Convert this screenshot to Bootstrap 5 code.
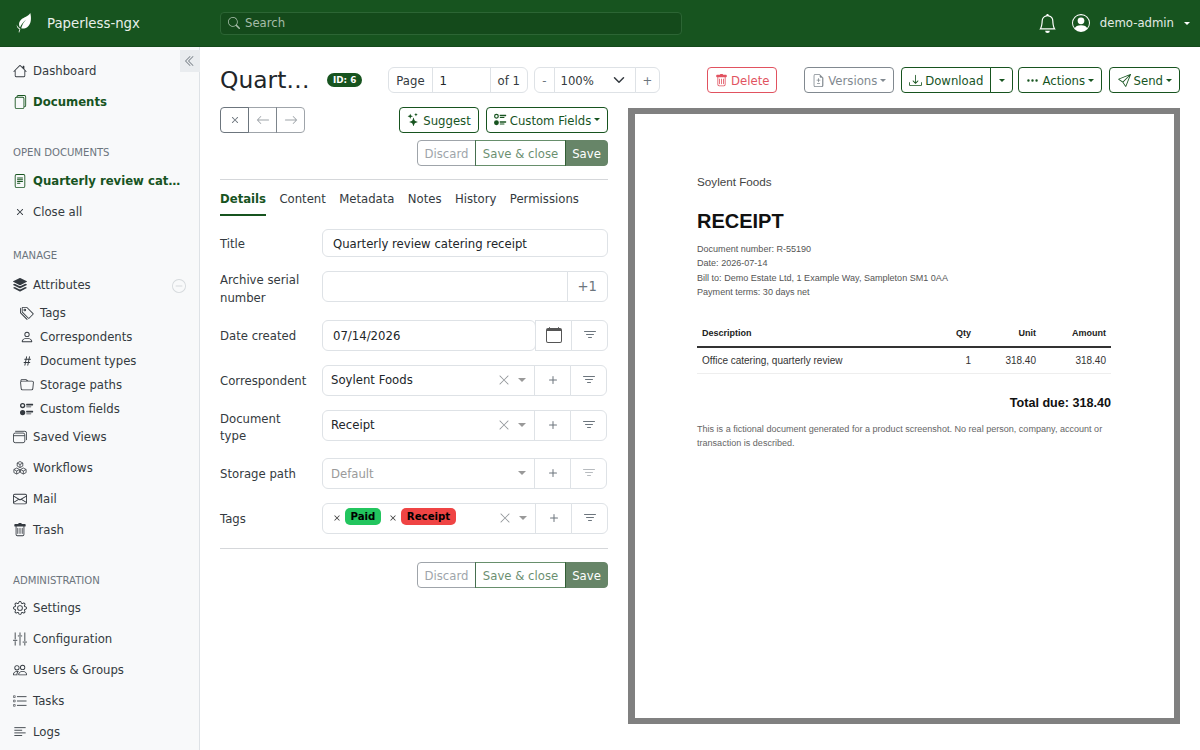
<!DOCTYPE html>
<html lang="en">
<head>
<meta charset="utf-8">
<title>Paperless-ngx</title>
<link href="https://cdn.jsdelivr.net/npm/bootstrap@5.3.0/dist/css/bootstrap.min.css" rel="stylesheet">
<style>
html,body{height:750px;overflow:hidden}
body{font-family:"DejaVu Sans",sans-serif;font-size:11.7px;color:#212529;background:#fff;line-height:1.5}
svg{fill:currentColor;flex:none;display:block}
.topbar{height:46.5px;background:#17541f;padding:1px 0 0;flex-wrap:nowrap;border-bottom:1px solid #14491b}
.brand-box{width:220px;padding-left:16px;gap:15px;color:#fff;font-size:13.3px}
.brand-box .brand-name{color:#e8efe9;padding-top:1px}
.search-box{width:462px;height:23px;background:#144a1b;border:1px solid #2c6534;border-radius:4px;color:#a5bca8;gap:5px;padding:0 7px}
.search-box span{padding-top:2px}
.user-area{color:#fff;margin-left:auto;padding-right:10px;gap:15px}
.user-cluster{gap:10px}
.user-area .user-name{color:#e3ebe4;font-size:11.7px;padding-top:2px}
.caret-mini{width:0;height:0;border-left:4px solid transparent;border-right:4px solid transparent;border-top:4px solid currentColor;display:inline-block;flex:none}
.user-caret{border-left-width:3px;border-right-width:3px;border-top-width:3px}
.page-wrap{height:703.5px}
.side-panel{width:200px;flex:none;background:#f8f9fa;border-right:1px solid #dee2e6;position:relative;padding-top:9px;color:#343a40}
.collapse-tab{position:absolute;right:-1px;top:3px;width:20px;height:22px;background:#e9ecef;color:#6c757d;display:flex;align-items:center;justify-content:center}
.side-link{display:flex;align-items:center;gap:6px;padding:7px 13px 5px;height:31px;color:#343a40;text-decoration:none;white-space:nowrap;position:relative}
.side-link svg{width:14px;height:14px;margin-bottom:2px}
.side-link.is-active{color:#17541f;font-weight:700}
.side-sub{height:24px;padding:3px 13px 1px 20px}
.side-gap{margin-top:1px}
.side-head{font-size:10.1px;color:#6c757d;padding:0 13px;height:16px;line-height:18px;text-transform:uppercase}
.head-open{margin-top:26px;margin-bottom:6px}
.head-manage{margin-top:19px;margin-bottom:7px}
.head-admin{margin-top:26px;margin-bottom:5px}
.fold-btn{position:absolute;right:13px;top:9px;color:#d5d9dc}
.main-pane{flex:1;padding:20px 20px 0 20px;min-width:0}
.head-row{height:27px;margin-bottom:13px}
.doc-title{font-size:23.4px;width:88px;flex:none;margin:0;font-weight:400;line-height:27px;white-space:nowrap;font-family:"DejaVu Sans",sans-serif}
.id-pill{background:#17541f;color:#fff;font-size:8.8px;font-weight:700;border-radius:7px;padding:0 6px;height:14px;line-height:14px;margin-left:19px;margin-right:26px;flex:none;white-space:nowrap}
.tool-group{height:26px;flex:none}
.tool-group .input-group-text,.tool-group .form-control,.tool-group .form-select,.tool-group .btn{font-size:11.7px;padding-top:3px;padding-bottom:1px;height:26px;line-height:20px;border-color:#dee2e6}
.tool-group .input-group-text{background:#fff;color:#343a40;padding-left:7px;padding-right:7px}
.page-num{width:59px!important;flex:none!important;padding-left:7px;padding-right:4px}
.zoom-sel{width:82px!important;flex:none!important;padding-left:6px;background-position:right 8px center;color:#343a40}
.tool-btn{color:#6c757d;background:#fff;padding-left:7px;padding-right:7px}
.act{--bs-btn-font-size:11.7px;--bs-btn-padding-x:6.5px;--bs-btn-border-radius:4px;padding-top:4px;padding-bottom:.5px;height:26px;line-height:19.5px;display:inline-flex;align-items:center;justify-content:center;gap:3px;white-space:nowrap;flex:none;--bs-btn-color:#17541f;--bs-btn-border-color:#17541f;--bs-btn-hover-color:#fff;--bs-btn-hover-bg:#17541f;--bs-btn-hover-border-color:#17541f;--bs-btn-disabled-color:#17541f;--bs-btn-disabled-border-color:#17541f}
.act svg{width:13px;height:13px;margin-bottom:3px}
.act.dropdown-toggle::after{margin-left:0;margin-bottom:3px}
.act-del{--bs-btn-color:#dc3545;--bs-btn-border-color:#dc3545;--bs-btn-disabled-color:#dc3545;--bs-btn-disabled-border-color:#dc3545;margin-left:49px;margin-right:27px;width:70px}
.act-del:disabled,.act-grey:disabled{opacity:.85}
.act-grey{--bs-btn-color:#6c757d;--bs-btn-border-color:#6c757d;--bs-btn-disabled-color:#6c757d;--bs-btn-disabled-border-color:#6c757d;margin-right:7px;width:90px}
.w-download{width:90px}
.w-split{width:23px}
.w-actions{width:84px;margin-left:5px;margin-right:7px}
.w-send{width:71px}
.w-suggest{width:80px}
.w-fields{width:122px}
.w-discard{width:59px}
.w-saveclose{width:91px}
.w-save{width:43px}
.act-solid{--bs-btn-disabled-bg:#164419;--bs-btn-disabled-color:#fff;--bs-btn-disabled-border-color:#164419}
.act-dis{--bs-btn-disabled-color:#6c757d;--bs-btn-disabled-border-color:#6c757d}
.left-col{width:388px;flex:none}
.right-col{flex:1;min-width:0;margin-left:20px;margin-top:1px}
.nav-grp{width:85px}
.nav-grp .btn{--bs-btn-color:#6c757d;--bs-btn-border-color:#6c757d;--bs-btn-disabled-color:#6c757d;--bs-btn-disabled-border-color:#6c757d;padding:0;justify-content:center;flex:1}
.nav-grp svg{width:14px;height:14px;margin-bottom:0}
.sep{border:0;border-top:1px solid #d5d7da;opacity:1;margin:0}
.tab-line{gap:13.3px;margin-top:8px;height:28px;margin-bottom:13.3px}
.tab-item{color:#343a40;text-decoration:none;height:28px;line-height:23px;display:block}
.tab-item.is-active{color:#17541f;font-weight:700;border-bottom:2px solid #17541f}
.form-line{display:flex;align-items:flex-start;margin-bottom:14px}
.form-tag{width:102px;flex:none;line-height:17.2px;padding-top:8px;color:#343a40}
.form-tag.two-line{padding-top:1px;height:34.3px}
.field-h{height:31px;flex-wrap:nowrap}
.field-h .form-control{height:31px;font-size:11.7px;padding:5px 10px 3px;border-color:#dee2e6;color:#212529}
.field-title{height:28.5px;font-size:11.7px;padding:5px 10px 3px;border-color:#dee2e6;color:#212529}
.line-title .form-tag{padding-top:7px}
.side-btn{width:37px;padding:0;display:flex;align-items:center;justify-content:center;border:1px solid #dee2e6;background:#fff;color:#6c757d;height:31px;margin-left:-1px;flex:none}
.side-btn svg{width:16px;height:16px}
.side-btn:last-child{border-radius:0 6px 6px 0}
.side-btn.is-faded{color:#b7bbbf}
.cal-btn{color:#555}
.plus-one{font-size:13.2px;color:#6c757d;border-color:#dee2e6;padding:0 10px;background:#fff}
.pick-box{flex:1;min-width:0;border:1px solid #dee2e6;border-radius:6px 0 0 6px;height:31px;display:flex;align-items:center;padding-left:8px;color:#212529;background:#fff}
.pick-fill{flex:1;min-width:0;white-space:nowrap;padding-top:2px}
.pick-muted{color:#9a9a9a}
.pick-x{color:#909498;margin-right:4px}
.pick-caret{color:#999;margin:0 8px 0 4px}
.tag-x{color:#333;margin:0 1.5px 0 0;display:flex}
.tag-chip{font-size:10.2px;font-weight:700;color:#000;border-radius:5px;height:17px;line-height:17px;padding:0 6px;margin-right:6px;margin-top:-3px;display:inline-block}
.chip-paid{background:#22c55e}
.chip-receipt{background:#ef4444}
.narrow-line{width:387px}
.doc-frame{border:solid #808080;border-width:6px 6px 6px 7px;height:616px;background:#808080}
.doc-sheet{background:#fff;height:604px;padding:58px 63px 0 62px;font-family:"Liberation Sans",Arial,sans-serif;color:#555}
.doc-from{font-size:11.7px;line-height:20px;color:#444}
.doc-big{font-size:20px;font-weight:700;color:#111;margin:17px 0 0;line-height:24px;font-family:"Liberation Sans",Arial,sans-serif}
.doc-meta{font-size:9.05px;line-height:14.5px;margin-top:9px;color:#555}
.doc-table{width:100%;font-size:9px;margin-top:21px;color:#333;border-collapse:collapse;table-layout:fixed}
.doc-table th{font-weight:700;height:26px;border-bottom:2px solid #333;padding:2px 5px 0;color:#222}
.doc-table td{height:27px;border-bottom:1px solid #eee;padding:1px 5px 0;font-size:10px}
.doc-total{font-size:12.6px;font-weight:700;color:#111;text-align:right;margin-top:20px;line-height:19px}
.doc-note{font-size:9.05px;line-height:14px;margin-top:9px;color:#666;width:410px}
</style>
</head>
<body>
<nav class="navbar topbar d-flex align-items-center">
  <div class="d-flex align-items-center brand-box">
    <svg width="16" height="20" viewBox="0 0 16 20" style="fill:#fff"><path d="M14.3 0C15.6 5.500 15.200 11 11.500 14 9.500 15.500 7 16 5.200 15.300 6 12 7.800 9 10.200 6.500 7.500 8.500 5.300 11.500 4 14.500 2.500 12 2.700 8.500 5.500 6.200 8 4.200 12 3.500 14.300 0Z"/><path d="M.8 11.500C1.300 13.500 2.500 15 4.300 15.800L4.300 16.300C3.800 17.500 3.500 18.500 3.300 19.500L2.600 19.300C2.800 18 3.200 17 3.600 16.300 1.700 15.600.5 13.500.8 11.500Z"/></svg>
    <span class="brand-name">Paperless-ngx</span>
  </div>
  <div class="search-box d-flex align-items-center">
    <svg width="12" height="12" viewBox="0 0 16 16"><path d="M11.742 10.344a6.5 6.5 0 1 0-1.397 1.398h-.001c.03.04.062.078.098.115l3.85 3.85a1 1 0 0 0 1.415-1.414l-3.85-3.85a1.007 1.007 0 0 0-.115-.1zM12 6.5a5.5 5.5 0 1 1-11 0 5.5 5.5 0 0 1 11 0z"/></svg>
    <span>Search</span>
  </div>
  <div class="user-area d-flex align-items-center">
    <svg width="19" height="19" viewBox="0 0 16 16"><path d="M8 16a2 2 0 0 0 2-2H6a2 2 0 0 0 2 2zM8 1.918l-.797.161A4.002 4.002 0 0 0 4 6c0 .628-.134 2.197-.459 3.742-.16.767-.376 1.566-.663 2.258h10.244c-.287-.692-.502-1.49-.663-2.258C12.134 8.197 12 6.628 12 6a4.002 4.002 0 0 0-3.203-3.92L8 1.917zM14.22 12c.223.447.481.801.78 1H1c.299-.199.557-.553.78-1C2.68 10.2 3 6.88 3 6c0-2.42 1.72-4.44 4.005-4.901a1 1 0 1 1 1.99 0A5.002 5.002 0 0 1 13 6c0 .88.32 4.2 1.22 6z"/></svg>
    <div class="d-flex align-items-center user-cluster">
      <svg width="18" height="18" viewBox="0 0 16 16"><path d="M11 6a3 3 0 1 1-6 0 3 3 0 0 1 6 0z"/><path fill-rule="evenodd" d="M0 8a8 8 0 1 1 16 0A8 8 0 0 1 0 8zm8-7a7 7 0 0 0-5.468 11.37C3.242 11.226 4.805 10 8 10s4.757 1.225 5.468 2.37A7 7 0 0 0 8 1z"/></svg>
      <span class="user-name">demo-admin</span>
      <span class="caret-mini user-caret"></span>
    </div>
  </div>
</nav>

<div class="d-flex page-wrap">
  <aside class="side-panel">
    <div class="collapse-tab"><svg width="12" height="12" viewBox="0 0 16 16"><path d="M8.354 1.646a.5.5 0 0 1 0 .708L2.707 8l5.647 5.646a.5.5 0 0 1-.708.708l-6-6a.5.5 0 0 1 0-.708l6-6a.5.5 0 0 1 .708 0z"/><path d="M12.354 1.646a.5.5 0 0 1 0 .708L6.707 8l5.647 5.646a.5.5 0 0 1-.708.708l-6-6a.5.5 0 0 1 0-.708l6-6a.5.5 0 0 1 .708 0z"/></svg></div>
    <a class="side-link" href="#"><svg viewBox="0 0 16 16"><path d="M8.707 1.5a1 1 0 0 0-1.414 0L.646 8.146a.5.5 0 0 0 .708.708L2 8.207V13.5A1.5 1.5 0 0 0 3.5 15h9a1.5 1.5 0 0 0 1.5-1.5V8.207l.646.647a.5.5 0 0 0 .708-.708L13 5.793V2.5a.5.5 0 0 0-.5-.5h-1a.5.5 0 0 0-.5.5v1.293L8.707 1.5ZM13 7.207V13.5a.5.5 0 0 1-.5.5h-9a.5.5 0 0 1-.5-.5V7.207l5-5 5 5Z"/></svg>Dashboard</a>
    <a class="side-link is-active" href="#"><svg viewBox="0 0 16 16"><path d="M13 0H6a2 2 0 0 0-2 2 2 2 0 0 0-2 2v10a2 2 0 0 0 2 2h7a2 2 0 0 0 2-2 2 2 0 0 0 2-2V2a2 2 0 0 0-2-2zm0 13V4a2 2 0 0 0-2-2H5a1 1 0 0 1 1-1h7a1 1 0 0 1 1 1v10a1 1 0 0 1-1 1zM3 4a1 1 0 0 1 1-1h7a1 1 0 0 1 1 1v10a1 1 0 0 1-1 1H4a1 1 0 0 1-1-1V4z"/></svg>Documents</a>
    <div class="side-head head-open">Open documents</div>
    <a class="side-link is-active" href="#"><svg viewBox="0 0 16 16"><path d="M5 4a.5.5 0 0 0 0 1h6a.5.5 0 0 0 0-1H5zm-.5 2.5A.5.5 0 0 1 5 6h6a.5.5 0 0 1 0 1H5a.5.5 0 0 1-.5-.5zM5 8a.5.5 0 0 0 0 1h6a.5.5 0 0 0 0-1H5zm0 2a.5.5 0 0 0 0 1h3a.5.5 0 0 0 0-1H5z"/><path d="M2 2a2 2 0 0 1 2-2h8a2 2 0 0 1 2 2v12a2 2 0 0 1-2 2H4a2 2 0 0 1-2-2V2zm10-1H4a1 1 0 0 0-1 1v12a1 1 0 0 0 1 1h8a1 1 0 0 0 1-1V2a1 1 0 0 0-1-1z"/></svg>Quarterly review cat…</a>
    <a class="side-link" href="#"><svg viewBox="0 0 16 16"><path d="M4.646 4.646a.5.5 0 0 1 .708 0L8 7.293l2.646-2.647a.5.5 0 0 1 .708.708L8.707 8l2.647 2.646a.5.5 0 0 1-.708.708L8 8.707l-2.646 2.647a.5.5 0 0 1-.708-.708L7.293 8 4.646 5.354a.5.5 0 0 1 0-.708z"/></svg>Close all</a>
    <div class="side-head head-manage">Manage</div>
    <a class="side-link" href="#"><svg viewBox="0 0 16 16"><path d="m14.12 10.163 1.715.858c.22.11.22.424 0 .534L8.267 15.34a.598.598 0 0 1-.534 0L.165 11.555a.299.299 0 0 1 0-.534l1.716-.858 5.317 2.659c.505.252 1.1.252 1.604 0l5.317-2.66zM7.733.063a.598.598 0 0 1 .534 0l7.568 3.784a.3.3 0 0 1 0 .535L8.267 8.165a.598.598 0 0 1-.534 0L.165 4.382a.299.299 0 0 1 0-.535L7.733.063z"/><path d="m14.12 6.576 1.715.858c.22.11.22.424 0 .534l-7.568 3.784a.598.598 0 0 1-.534 0L.165 7.968a.299.299 0 0 1 0-.534l1.716-.858 5.317 2.659c.505.252 1.1.252 1.604 0l5.317-2.659z"/></svg>Attributes<span class="fold-btn"><svg viewBox="0 0 16 16"><path d="M8 15A7 7 0 1 1 8 1a7 7 0 0 1 0 14zm0 1A8 8 0 1 0 8 0a8 8 0 0 0 0 16z"/><path d="M4 8a.5.5 0 0 1 .5-.5h7a.5.5 0 0 1 0 1h-7A.5.5 0 0 1 4 8z"/></svg></span></a>
    <a class="side-link side-sub" href="#"><svg viewBox="0 0 16 16"><path d="M3 2v4.586l7 7L14.586 9l-7-7H3zM2 2a1 1 0 0 1 1-1h4.586a1 1 0 0 1 .707.293l7 7a1 1 0 0 1 0 1.414l-4.586 4.586a1 1 0 0 1-1.414 0l-7-7A1 1 0 0 1 2 6.586V2z"/><path d="M5.5 5a.5.5 0 1 1 0-1 .5.5 0 0 1 0 1zm0 1a1.5 1.5 0 1 0 0-3 1.5 1.5 0 0 0 0 3zM1 7.086a1 1 0 0 0 .293.707L8.75 15.25l-.043.043a1 1 0 0 1-1.414 0l-7-7A1 1 0 0 1 0 7.586V3a1 1 0 0 1 1-1v5.086z"/></svg>Tags</a>
    <a class="side-link side-sub" href="#"><svg viewBox="0 0 16 16"><path d="M8 8a3 3 0 1 0 0-6 3 3 0 0 0 0 6Zm2-3a2 2 0 1 1-4 0 2 2 0 0 1 4 0Zm4 8c0 1-1 1-1 1H3s-1 0-1-1 1-4 6-4 6 3 6 4Zm-1-.004c-.001-.246-.154-.986-.832-1.664C11.516 10.68 10.289 10 8 10c-2.29 0-3.516.68-4.168 1.332-.678.678-.83 1.418-.832 1.664h10Z"/></svg>Correspondents</a>
    <a class="side-link side-sub" href="#"><svg viewBox="0 0 16 16"><path d="M8.39 12.648a1.32 1.32 0 0 0-.015.18c0 .305.21.508.5.508.266 0 .492-.172.555-.477l.554-2.703h1.204c.421 0 .617-.234.617-.547 0-.312-.188-.53-.617-.53h-.985l.516-2.524h1.265c.43 0 .618-.227.618-.547 0-.313-.188-.524-.618-.524h-1.046l.476-2.304a1.06 1.06 0 0 0 .016-.164.51.51 0 0 0-.516-.516.54.54 0 0 0-.539.43l-.523 2.554H7.617l.477-2.304c.008-.04.015-.118.015-.164a.512.512 0 0 0-.523-.516.539.539 0 0 0-.531.43L6.53 5.484H5.414c-.43 0-.617.22-.617.532 0 .312.187.539.617.539h.906l-.515 2.523H4.609c-.421 0-.609.219-.609.531 0 .313.188.547.61.547h.976l-.516 2.492c-.008.04-.015.125-.015.18 0 .305.21.508.5.508.265 0 .492-.172.554-.477l.555-2.703h2.242l-.515 2.492zm-1-6.109h2.266l-.515 2.563H6.859l.532-2.563z"/></svg>Document types</a>
    <a class="side-link side-sub" href="#"><svg viewBox="0 0 16 16"><path d="M.54 3.87.5 3a2 2 0 0 1 2-2h3.672a2 2 0 0 1 1.414.586l.828.828A2 2 0 0 0 9.828 3h3.982a2 2 0 0 1 1.992 2.181l-.637 7A2 2 0 0 1 13.174 14H2.826a2 2 0 0 1-1.991-1.819l-.637-7a1.99 1.99 0 0 1 .342-1.31zM2.19 4a1 1 0 0 0-.996 1.09l.637 7a1 1 0 0 0 .995.91h10.348a1 1 0 0 0 .995-.91l.637-7A1 1 0 0 0 13.81 4H2.19zm4.69-1.707A1 1 0 0 0 6.172 2H2.5a1 1 0 0 0-1 .981l.006.139C1.72 3.042 1.95 3 2.19 3h5.396l-.707-.707z"/></svg>Storage paths</a>
    <a class="side-link side-sub" href="#"><svg viewBox="0 0 16 16"><path d="M7 2.5a.5.5 0 0 1 .5-.5h7a.5.5 0 0 1 .5.5v1a.5.5 0 0 1-.5.5h-7a.5.5 0 0 1-.5-.5v-1zM0 12a3 3 0 1 1 6 0 3 3 0 0 1-6 0zm7-1.5a.5.5 0 0 1 .5-.5h7a.5.5 0 0 1 .5.5v1a.5.5 0 0 1-.5.5h-7a.5.5 0 0 1-.5-.5v-1zm0-5a.5.5 0 0 1 .5-.5h5a.5.5 0 0 1 0 1h-5a.5.5 0 0 1-.5-.5zm0 8a.5.5 0 0 1 .5-.5h5a.5.5 0 0 1 0 1h-5a.5.5 0 0 1-.5-.5zM3 1a3 3 0 1 0 0 6 3 3 0 0 0 0-6zm0 4.5a1.5 1.5 0 1 1 0-3 1.5 1.5 0 0 1 0 3z"/></svg>Custom fields</a>
    <a class="side-link side-gap" href="#"><svg viewBox="0 0 16 16" style="fill:none;stroke:currentColor"><rect x=".5" y="3.500" width="13" height="11" rx="2"/><path d="M.5 6.500h13M2.500 1.500h11a2 2 0 0 1 2 2v8"/></svg>Saved Views</a>
    <a class="side-link" href="#"><svg viewBox="0 0 16 16" style="fill:none;stroke:currentColor" stroke-width=".9" stroke-linejoin="round"><path d="M8 .6 11.2 2.300V5.800L8 7.500 4.800 5.800V2.300ZM4.800 2.300 8 4 11.200 2.300M8 4V7.500"/><path d="M4.200 8 7.400 9.700V13.200L4.200 14.900 1 13.200V9.700ZM1 9.700 4.200 11.400 7.400 9.700M4.200 11.400V14.900"/><path d="M11.800 8 15 9.700V13.200L11.800 14.900 8.600 13.200V9.700ZM8.600 9.700 11.800 11.400 15 9.700M11.800 11.400V14.900"/></svg>Workflows</a>
    <a class="side-link" href="#"><svg viewBox="0 0 16 16"><path d="M0 4a2 2 0 0 1 2-2h12a2 2 0 0 1 2 2v8a2 2 0 0 1-2 2H2a2 2 0 0 1-2-2V4Zm2-1a1 1 0 0 0-1 1v.217l7 4.2 7-4.2V4a1 1 0 0 0-1-1H2Zm13 2.383-4.708 2.825L15 11.105V5.383Zm-.034 6.876-5.64-3.471L8 9.583l-1.326-.795-5.64 3.47A1 1 0 0 0 2 13h12a1 1 0 0 0 .966-.741ZM1 11.105l4.708-2.897L1 5.383v5.722Z"/></svg>Mail</a>
    <a class="side-link" href="#"><svg viewBox="0 0 16 16"><path d="M5.5 5.5A.5.5 0 0 1 6 6v6a.5.5 0 0 1-1 0V6a.5.5 0 0 1 .5-.5zm2.5 0a.5.5 0 0 1 .5.5v6a.5.5 0 0 1-1 0V6a.5.5 0 0 1 .5-.5zm3 .5a.5.5 0 0 0-1 0v6a.5.5 0 0 0 1 0V6z"/><path d="M14.5 3a1 1 0 0 1-1 1H13v9a2 2 0 0 1-2 2H5a2 2 0 0 1-2-2V4h-.5a1 1 0 0 1-1-1V2a1 1 0 0 1 1-1H6a1 1 0 0 1 1-1h2a1 1 0 0 1 1 1h3.5a1 1 0 0 1 1 1v1zM4.118 4 4 4.059V13a1 1 0 0 0 1 1h6a1 1 0 0 0 1-1V4.059L11.882 4H4.118zM2.5 3V2h11v1h-11z"/></svg>Trash</a>
    <div class="side-head head-admin">Administration</div>
    <a class="side-link" href="#"><svg viewBox="0 0 16 16"><path d="M8 4.754a3.246 3.246 0 1 0 0 6.492 3.246 3.246 0 0 0 0-6.492zM5.754 8a2.246 2.246 0 1 1 4.492 0 2.246 2.246 0 0 1-4.492 0z"/><path d="M9.796 1.343c-.527-1.79-3.065-1.79-3.592 0l-.094.319a.873.873 0 0 1-1.255.52l-.292-.16c-1.64-.892-3.433.902-2.54 2.541l.159.292a.873.873 0 0 1-.52 1.255l-.319.094c-1.79.527-1.79 3.065 0 3.592l.319.094a.873.873 0 0 1 .52 1.255l-.16.292c-.892 1.64.901 3.434 2.541 2.54l.292-.159a.873.873 0 0 1 1.255.52l.094.319c.527 1.79 3.065 1.79 3.592 0l.094-.319a.873.873 0 0 1 1.255-.52l.292.16c1.64.893 3.434-.902 2.54-2.541l-.159-.292a.873.873 0 0 1 .52-1.255l.319-.094c1.79-.527 1.79-3.065 0-3.592l-.319-.094a.873.873 0 0 1-.52-1.255l.16-.292c.893-1.64-.902-3.433-2.541-2.54l-.292.159a.873.873 0 0 1-1.255-.52l-.094-.319zm-2.633.283c.246-.835 1.428-.835 1.674 0l.094.319a1.873 1.873 0 0 0 2.693 1.115l.291-.16c.764-.415 1.6.42 1.184 1.185l-.159.292a1.873 1.873 0 0 0 1.116 2.692l.318.094c.835.246.835 1.428 0 1.674l-.319.094a1.873 1.873 0 0 0-1.115 2.693l.16.291c.415.764-.42 1.6-1.185 1.184l-.291-.159a1.873 1.873 0 0 0-2.693 1.116l-.094.318c-.246.835-1.428.835-1.674 0l-.094-.319a1.873 1.873 0 0 0-2.692-1.115l-.292.16c-.764.415-1.6-.42-1.184-1.185l.159-.291A1.873 1.873 0 0 0 1.945 8.93l-.319-.094c-.835-.246-.835-1.428 0-1.674l.319-.094A1.873 1.873 0 0 0 3.06 4.377l-.16-.292c-.415-.764.42-1.6 1.185-1.184l.292.159a1.873 1.873 0 0 0 2.692-1.115l.094-.319z"/></svg>Settings</a>
    <a class="side-link" href="#"><svg viewBox="0 0 16 16" style="fill:none;stroke:currentColor" stroke-linecap="round"><path d="M2.500 1v7M2.500 11v4M8 1v2M8 6v9M13.500 1v9M13.500 13v2M.5 9.500h4M6 4.500h4M11.500 11.500h4"/></svg>Configuration</a>
    <a class="side-link" href="#"><svg viewBox="0 0 16 16"><path d="M15 14s1 0 1-1-1-4-5-4-5 3-5 4 1 1 1 1h8Zm-7.978-1A.261.261 0 0 1 7 12.996c.001-.264.167-1.03.76-1.72C8.312 10.629 9.282 10 11 10c1.717 0 2.687.63 3.24 1.276.593.69.758 1.457.76 1.72l-.008.002a.274.274 0 0 1-.014.002H7.022ZM11 7a2 2 0 1 0 0-4 2 2 0 0 0 0 4Zm3-2a3 3 0 1 1-6 0 3 3 0 0 1 6 0ZM6.936 9.28a5.88 5.88 0 0 0-1.23-.247A7.35 7.35 0 0 0 5 9c-4 0-5 3-5 4 0 .667.333 1 1 1h4.216A2.238 2.238 0 0 1 5 13c0-1.01.377-2.042 1.09-2.904.243-.294.526-.569.846-.816ZM4.92 10A5.493 5.493 0 0 0 4 13H1c0-.26.164-1.03.76-1.724.545-.636 1.492-1.256 3.16-1.275ZM1.5 5.5a3 3 0 1 1 6 0 3 3 0 0 1-6 0Zm3-2a2 2 0 1 0 0 4 2 2 0 0 0 0-4Z"/></svg>Users &amp; Groups</a>
    <a class="side-link" href="#"><svg viewBox="0 0 16 16" style="fill:none;stroke:currentColor" stroke-linecap="round"><path d="M5 3h10M5 8h10M5 13h10"/><path d="M1 2h1.500v2H1zM1 7h1.500v2H1zM1 12h1.500v2H1z" stroke-width=".7"/></svg>Tasks</a>
    <a class="side-link" href="#"><svg viewBox="0 0 16 16" style="fill:none;stroke:currentColor" stroke-linecap="round"><path d="M2 3h12M2 6h8M2 9h12M2 12h8"/></svg>Logs</a>
  </aside>

  <main class="main-pane">
    <div class="d-flex align-items-center head-row">
      <h1 class="doc-title">Quart…</h1>
      <span class="id-pill">ID: 6</span>
      <div class="input-group tool-group flex-nowrap" style="width:135px">
        <span class="input-group-text">Page</span>
        <input class="form-control page-num" type="text" value="1" aria-label="Page">
        <span class="input-group-text">of 1</span>
      </div>
      <div class="input-group tool-group flex-nowrap" style="width:124px;margin-left:11px">
        <button class="btn tool-btn" type="button">-</button>
        <select class="form-select zoom-sel" aria-label="Zoom"><option>100%</option></select>
        <button class="btn tool-btn" type="button">+</button>
      </div>
      <button class="btn act act-del" type="button" disabled><svg viewBox="0 0 16 16"><path d="M5.5 5.5A.5.5 0 0 1 6 6v6a.5.5 0 0 1-1 0V6a.5.5 0 0 1 .5-.5zm2.5 0a.5.5 0 0 1 .5.5v6a.5.5 0 0 1-1 0V6a.5.5 0 0 1 .5-.5zm3 .5a.5.5 0 0 0-1 0v6a.5.5 0 0 0 1 0V6z"/><path d="M14.5 3a1 1 0 0 1-1 1H13v9a2 2 0 0 1-2 2H5a2 2 0 0 1-2-2V4h-.5a1 1 0 0 1-1-1V2a1 1 0 0 1 1-1H6a1 1 0 0 1 1-1h2a1 1 0 0 1 1 1h3.5a1 1 0 0 1 1 1v1zM4.118 4 4 4.059V13a1 1 0 0 0 1 1h6a1 1 0 0 0 1-1V4.059L11.882 4H4.118zM2.5 3V2h11v1h-11z"/></svg>Delete</button>
      <button class="btn act act-grey dropdown-toggle" type="button" disabled><svg viewBox="0 0 16 16"><path d="M8 5a.5.5 0 0 1 .5.5V7H10a.5.5 0 0 1 0 1H8.500v1.500a.5.5 0 0 1-1 0V8H6a.5.5 0 0 1 0-1h1.500V5.500A.5.5 0 0 1 8 5zm-2 6.500a.5.5 0 0 1 .5-.5h3a.5.5 0 0 1 0 1h-3a.5.5 0 0 1-.5-.5z"/><path d="M9.293 0H4a2 2 0 0 0-2 2v12a2 2 0 0 0 2 2h8a2 2 0 0 0 2-2V4.707L9.293 0zM9.500 1.500v2a1 1 0 0 0 1 1h2V14a1 1 0 0 1-1 1H4a1 1 0 0 1-1-1V2a1 1 0 0 1 1-1h5.500v.5z"/></svg>Versions</button>
      <div class="btn-group">
        <button class="btn act w-download" type="button"><svg viewBox="0 0 16 16"><path d="M.5 9.900a.5.5 0 0 1 .5.5v2.500a1 1 0 0 0 1 1h12a1 1 0 0 0 1-1v-2.500a.5.5 0 0 1 1 0v2.500a2 2 0 0 1-2 2H2a2 2 0 0 1-2-2v-2.500a.5.5 0 0 1 .5-.5z"/><path d="M7.646 11.854a.5.5 0 0 0 .708 0l3-3a.5.5 0 0 0-.708-.708L8.500 10.293V1.500a.5.5 0 0 0-1 0v8.793L5.354 8.146a.5.5 0 1 0-.708.708l3 3z"/></svg>Download</button>
        <button class="btn act w-split dropdown-toggle dropdown-toggle-split" type="button" aria-label="More"></button>
      </div>
      <button class="btn act w-actions dropdown-toggle" type="button"><svg viewBox="0 0 16 16"><path d="M3 9.500a1.500 1.500 0 1 1 0-3 1.500 1.500 0 0 1 0 3zm5 0a1.500 1.500 0 1 1 0-3 1.500 1.500 0 0 1 0 3zm5 0a1.500 1.500 0 1 1 0-3 1.500 1.500 0 0 1 0 3z"/></svg>Actions</button>
      <button class="btn act w-send dropdown-toggle" type="button"><svg viewBox="0 0 16 16"><path d="M15.854.146a.5.5 0 0 1 .11.54l-5.819 14.547a.75.75 0 0 1-1.329.124l-3.178-4.995L.643 7.184a.75.75 0 0 1 .124-1.33L15.314.037a.5.5 0 0 1 .54.11ZM6.636 10.070l2.761 4.338L14.130 2.576 6.636 10.070Zm6.787-8.201L1.591 6.602l4.339 2.760 7.494-7.493Z"/></svg>Send</button>
    </div>

    <div class="d-flex">
      <section class="left-col">
        <div class="d-flex justify-content-between">
          <div class="btn-group nav-grp">
            <button class="btn act" type="button"><svg viewBox="0 0 16 16"><path d="M4.646 4.646a.5.5 0 0 1 .708 0L8 7.293l2.646-2.647a.5.5 0 0 1 .708.708L8.707 8l2.647 2.646a.5.5 0 0 1-.708.708L8 8.707l-2.646 2.647a.5.5 0 0 1-.708-.708L7.293 8 4.646 5.354a.5.5 0 0 1 0-.708z"/></svg></button>
            <button class="btn act" type="button" disabled><svg viewBox="0 0 16 16"><path d="M15 8a.5.5 0 0 0-.5-.5H2.707l3.147-3.146a.5.5 0 1 0-.708-.708l-4 4a.5.5 0 0 0 0 .708l4 4a.5.5 0 0 0 .708-.708L2.707 8.500H14.500A.5.5 0 0 0 15 8z"/></svg></button>
            <button class="btn act" type="button" disabled><svg viewBox="0 0 16 16"><path d="M1 8a.5.5 0 0 1 .5-.5h11.793l-3.147-3.146a.5.5 0 0 1 .708-.708l4 4a.5.5 0 0 1 0 .708l-4 4a.5.5 0 0 1-.708-.708L13.293 8.500H1.500A.5.5 0 0 1 1 8z"/></svg></button>
          </div>
          <div class="d-flex" style="gap:7px">
            <button class="btn act w-suggest" type="button"><svg viewBox="0 0 16 16"><path d="M7.657 6.247c.11-.33.576-.33.686 0l.645 1.937a2.890 2.890 0 0 0 1.829 1.828l1.936.645c.33.11.33.576 0 .686l-1.937.645a2.890 2.890 0 0 0-1.828 1.829l-.645 1.936a.361.361 0 0 1-.686 0l-.645-1.937a2.890 2.890 0 0 0-1.828-1.828l-1.937-.645a.361.361 0 0 1 0-.686l1.937-.645a2.890 2.890 0 0 0 1.828-1.828l.645-1.937zM3.794 1.148a.217.217 0 0 1 .412 0l.387 1.162c.173.518.579.924 1.097 1.097l1.162.387a.217.217 0 0 1 0 .412l-1.162.387A1.734 1.734 0 0 0 4.593 5.690l-.387 1.162a.217.217 0 0 1-.412 0L3.407 5.690A1.734 1.734 0 0 0 2.310 4.593l-1.162-.387a.217.217 0 0 1 0-.412l1.162-.387A1.734 1.734 0 0 0 3.407 2.310l.387-1.162zM10.863.099a.145.145 0 0 1 .274 0l.258.774c.115.346.386.617.732.732l.774.258a.145.145 0 0 1 0 .274l-.774.258a1.156 1.156 0 0 0-.732.732l-.258.774a.145.145 0 0 1-.274 0l-.258-.774a1.156 1.156 0 0 0-.732-.732L9.100 2.137a.145.145 0 0 1 0-.274l.774-.258c.346-.115.617-.386.732-.732L10.863.100z"/></svg>Suggest</button>
            <button class="btn act w-fields dropdown-toggle" type="button"><svg viewBox="0 0 16 16"><path d="M7 2.500a.5.5 0 0 1 .5-.5h7a.5.5 0 0 1 .5.5v1a.5.5 0 0 1-.5.5h-7a.5.5 0 0 1-.5-.5v-1zM0 12a3 3 0 1 1 6 0 3 3 0 0 1-6 0zm7-1.500a.5.5 0 0 1 .5-.5h7a.5.5 0 0 1 .5.5v1a.5.5 0 0 1-.5.5h-7a.5.5 0 0 1-.5-.5v-1zm0-5a.5.5 0 0 1 .5-.5h5a.5.5 0 0 1 0 1h-5a.5.5 0 0 1-.5-.5zm0 8a.5.5 0 0 1 .5-.5h5a.5.5 0 0 1 0 1h-5a.5.5 0 0 1-.5-.5zM3 1a3 3 0 1 0 0 6 3 3 0 0 0 0-6zm0 4.500a1.500 1.500 0 1 1 0-3 1.500 1.500 0 0 1 0 3z"/></svg>Custom Fields</button>
          </div>
        </div>
        <div class="d-flex justify-content-end" style="margin-top:7px;margin-bottom:13px">
          <div class="btn-group">
            <button class="btn act act-dis w-discard" type="button" disabled>Discard</button>
            <button class="btn act w-saveclose" type="button" disabled>Save &amp; close</button>
            <button class="btn act act-solid w-save" type="button" disabled>Save</button>
          </div>
        </div>
        <hr class="sep">
        <div class="d-flex tab-line">
          <a class="tab-item is-active" href="#">Details</a>
          <a class="tab-item" href="#">Content</a>
          <a class="tab-item" href="#">Metadata</a>
          <a class="tab-item" href="#">Notes</a>
          <a class="tab-item" href="#">History</a>
          <a class="tab-item" href="#">Permissions</a>
        </div>

        <div class="form-line line-title"><label class="form-tag">Title</label><input class="form-control field-title" type="text" value="Quarterly review catering receipt" aria-label="Title"></div>
        <div class="form-line"><label class="form-tag two-line">Archive serial<br>number</label>
          <div class="input-group field-h flex-grow-1"><input class="form-control" type="text" aria-label="Archive serial number"><span class="input-group-text plus-one">+1</span></div>
        </div>
        <div class="form-line"><label class="form-tag">Date created</label>
          <div class="d-flex flex-grow-1 field-h">
            <div class="input-group field-h flex-grow-1"><input class="form-control" type="text" value="07/14/2026" aria-label="Date created"></div>
            <div class="side-btn cal-btn"><svg viewBox="0 0 16 16"><path d="M3.500 0a.5.5 0 0 1 .5.5V1h8V.5a.5.5 0 0 1 1 0V1h1a2 2 0 0 1 2 2v11a2 2 0 0 1-2 2H2a2 2 0 0 1-2-2V3a2 2 0 0 1 2-2h1V.5a.5.5 0 0 1 .5-.5zM1 4v10a1 1 0 0 0 1 1h12a1 1 0 0 0 1-1V4H1z"/></svg></div>
            <div class="side-btn"><svg viewBox="0 0 16 16"><path d="M6 10.500a.5.5 0 0 1 .5-.5h3a.5.5 0 0 1 0 1h-3a.5.5 0 0 1-.5-.5zm-2-3a.5.5 0 0 1 .5-.5h7a.5.5 0 0 1 0 1h-7a.5.5 0 0 1-.5-.5zm-2-3a.5.5 0 0 1 .5-.5h11a.5.5 0 0 1 0 1h-11a.5.5 0 0 1-.5-.5z"/></svg></div>
          </div>
        </div>
        <div class="form-line narrow-line"><label class="form-tag">Correspondent</label>
          <div class="d-flex flex-grow-1 field-h">
            <div class="pick-box"><span class="pick-fill">Soylent Foods</span><svg class="pick-x" width="12" height="12" viewBox="0 0 16 16"><path d="M2.146 2.854a.5.5 0 1 1 .708-.708L8 7.293l5.146-5.147a.5.5 0 0 1 .708.708L8.707 8l5.147 5.146a.5.5 0 0 1-.708.708L8 8.707l-5.146 5.147a.5.5 0 0 1-.708-.708L7.293 8 2.146 2.854Z"/></svg><span class="caret-mini pick-caret"></span></div>
            <div class="side-btn"><svg viewBox="0 0 16 16"><path d="M8 4a.5.5 0 0 1 .5.5v3h3a.5.5 0 0 1 0 1h-3v3a.5.5 0 0 1-1 0v-3h-3a.5.5 0 0 1 0-1h3v-3A.5.5 0 0 1 8 4z"/></svg></div>
            <div class="side-btn"><svg viewBox="0 0 16 16"><path d="M6 10.500a.5.5 0 0 1 .5-.5h3a.5.5 0 0 1 0 1h-3a.5.5 0 0 1-.5-.5zm-2-3a.5.5 0 0 1 .5-.5h7a.5.5 0 0 1 0 1h-7a.5.5 0 0 1-.5-.5zm-2-3a.5.5 0 0 1 .5-.5h11a.5.5 0 0 1 0 1h-11a.5.5 0 0 1-.5-.5z"/></svg></div>
          </div>
        </div>
        <div class="form-line narrow-line"><label class="form-tag two-line">Document<br>type</label>
          <div class="d-flex flex-grow-1 field-h">
            <div class="pick-box"><span class="pick-fill">Receipt</span><svg class="pick-x" width="12" height="12" viewBox="0 0 16 16"><path d="M2.146 2.854a.5.5 0 1 1 .708-.708L8 7.293l5.146-5.147a.5.5 0 0 1 .708.708L8.707 8l5.147 5.146a.5.5 0 0 1-.708.708L8 8.707l-5.146 5.147a.5.5 0 0 1-.708-.708L7.293 8 2.146 2.854Z"/></svg><span class="caret-mini pick-caret"></span></div>
            <div class="side-btn"><svg viewBox="0 0 16 16"><path d="M8 4a.5.5 0 0 1 .5.5v3h3a.5.5 0 0 1 0 1h-3v3a.5.5 0 0 1-1 0v-3h-3a.5.5 0 0 1 0-1h3v-3A.5.5 0 0 1 8 4z"/></svg></div>
            <div class="side-btn"><svg viewBox="0 0 16 16"><path d="M6 10.500a.5.5 0 0 1 .5-.5h3a.5.5 0 0 1 0 1h-3a.5.5 0 0 1-.5-.5zm-2-3a.5.5 0 0 1 .5-.5h7a.5.5 0 0 1 0 1h-7a.5.5 0 0 1-.5-.5zm-2-3a.5.5 0 0 1 .5-.5h11a.5.5 0 0 1 0 1h-11a.5.5 0 0 1-.5-.5z"/></svg></div>
          </div>
        </div>
        <div class="form-line narrow-line"><label class="form-tag">Storage path</label>
          <div class="d-flex flex-grow-1 field-h">
            <div class="pick-box"><span class="pick-fill pick-muted">Default</span><span class="caret-mini pick-caret"></span></div>
            <div class="side-btn"><svg viewBox="0 0 16 16"><path d="M8 4a.5.5 0 0 1 .5.5v3h3a.5.5 0 0 1 0 1h-3v3a.5.5 0 0 1-1 0v-3h-3a.5.5 0 0 1 0-1h3v-3A.5.5 0 0 1 8 4z"/></svg></div>
            <div class="side-btn is-faded"><svg viewBox="0 0 16 16"><path d="M6 10.500a.5.5 0 0 1 .5-.5h3a.5.5 0 0 1 0 1h-3a.5.5 0 0 1-.5-.5zm-2-3a.5.5 0 0 1 .5-.5h7a.5.5 0 0 1 0 1h-7a.5.5 0 0 1-.5-.5zm-2-3a.5.5 0 0 1 .5-.5h11a.5.5 0 0 1 0 1h-11a.5.5 0 0 1-.5-.5z"/></svg></div>
          </div>
        </div>
        <div class="form-line"><label class="form-tag">Tags</label>
          <div class="d-flex flex-grow-1 field-h">
            <div class="pick-box"><span class="pick-fill pt-0 d-flex align-items-center"><span class="tag-x"><svg width="12" height="12" viewBox="0 0 16 16"><path d="M4.646 4.646a.5.5 0 0 1 .708 0L8 7.293l2.646-2.647a.5.5 0 0 1 .708.708L8.707 8l2.647 2.646a.5.5 0 0 1-.708.708L8 8.707l-2.646 2.647a.5.5 0 0 1-.708-.708L7.293 8 4.646 5.354a.5.5 0 0 1 0-.708z"/></svg></span><span class="tag-chip chip-paid">Paid</span><span class="tag-x"><svg width="12" height="12" viewBox="0 0 16 16"><path d="M4.646 4.646a.5.5 0 0 1 .708 0L8 7.293l2.646-2.647a.5.5 0 0 1 .708.708L8.707 8l2.647 2.646a.5.5 0 0 1-.708.708L8 8.707l-2.646 2.647a.5.5 0 0 1-.708-.708L7.293 8 4.646 5.354a.5.5 0 0 1 0-.708z"/></svg></span><span class="tag-chip chip-receipt">Receipt</span></span><svg class="pick-x" width="12" height="12" viewBox="0 0 16 16"><path d="M2.146 2.854a.5.5 0 1 1 .708-.708L8 7.293l5.146-5.147a.5.5 0 0 1 .708.708L8.707 8l5.147 5.146a.5.5 0 0 1-.708.708L8 8.707l-5.146 5.147a.5.5 0 0 1-.708-.708L7.293 8 2.146 2.854Z"/></svg><span class="caret-mini pick-caret"></span></div>
            <div class="side-btn"><svg viewBox="0 0 16 16"><path d="M8 4a.5.5 0 0 1 .5.5v3h3a.5.5 0 0 1 0 1h-3v3a.5.5 0 0 1-1 0v-3h-3a.5.5 0 0 1 0-1h3v-3A.5.5 0 0 1 8 4z"/></svg></div>
            <div class="side-btn"><svg viewBox="0 0 16 16"><path d="M6 10.500a.5.5 0 0 1 .5-.5h3a.5.5 0 0 1 0 1h-3a.5.5 0 0 1-.5-.5zm-2-3a.5.5 0 0 1 .5-.5h7a.5.5 0 0 1 0 1h-7a.5.5 0 0 1-.5-.5zm-2-3a.5.5 0 0 1 .5-.5h11a.5.5 0 0 1 0 1h-11a.5.5 0 0 1-.5-.5z"/></svg></div>
          </div>
        </div>
        <hr class="sep">
        <div class="d-flex justify-content-end" style="margin-top:13px">
          <div class="btn-group">
            <button class="btn act act-dis w-discard" type="button" disabled>Discard</button>
            <button class="btn act w-saveclose" type="button" disabled>Save &amp; close</button>
            <button class="btn act act-solid w-save" type="button" disabled>Save</button>
          </div>
        </div>
      </section>

      <section class="right-col">
        <div class="doc-frame">
          <div class="doc-sheet">
            <div class="doc-from">Soylent Foods</div>
            <h2 class="doc-big">RECEIPT</h2>
            <div class="doc-meta">Document number: R-55190<br>Date: 2026-07-14<br>Bill to: Demo Estate Ltd, 1 Example Way, Sampleton SM1 0AA<br>Payment terms: 30 days net</div>
            <table class="doc-table">
              <colgroup><col style="width:225px"><col style="width:54px"><col style="width:65px"><col style="width:70px"></colgroup>
              <thead><tr><th>Description</th><th class="text-end">Qty</th><th class="text-end">Unit</th><th class="text-end">Amount</th></tr></thead>
              <tbody><tr><td>Office catering, quarterly review</td><td class="text-end">1</td><td class="text-end">318.40</td><td class="text-end">318.40</td></tr></tbody>
            </table>
            <div class="doc-total">Total due: 318.40</div>
            <div class="doc-note">This is a fictional document generated for a product screenshot. No real person, company, account or transaction is described.</div>
          </div>
        </div>
      </section>
    </div>
  </main>
</div>
</body>
</html>
